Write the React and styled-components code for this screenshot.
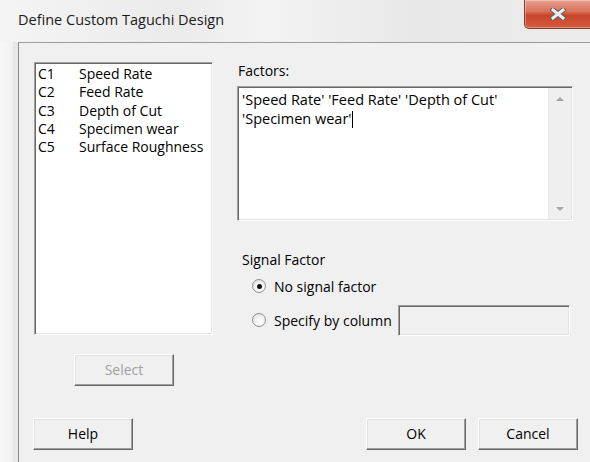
import React from "react";
import styled, { createGlobalStyle } from "styled-components";

const GlobalStyle = createGlobalStyle`
  html, body {
    margin: 0;
    padding: 0;
    background: #f3f3f3;
    overflow: hidden;
  }
`;

const Window = styled.div`
  width: 590px;
  height: 462px;
  display: flex;
  flex-direction: column;
  background: linear-gradient(90deg, #f7f7f7 0, #f2f2f2 12px, #e6e6e6 13px, #e9e9e9 19px);
  font-family: "Open Sans", "Liberation Sans", sans-serif;
  color: #000;
  overflow: hidden;
`;

const TitleBar = styled.div`
  height: 42px;
  display: flex;
  align-items: flex-start;
  justify-content: space-between;
  background: linear-gradient(90deg, #f4f4f4 0%, #ebebeb 30%, #f3f3f3 45%, #e8e8e8 70%, #ececec 100%);
`;

const Title = styled.div`
  font-family: "Open Sans", sans-serif;
  font-size: 14.5px;
  color: #1a1a1a;
  padding: 10px 0 0 18px;
`;

const CloseButton = styled.div`
  width: 66px;
  height: 28px;
  margin-right: -2px;
  border: 1px solid #8a3a2a;
  border-top: none;
  border-radius: 0 0 0 5px;
  background: linear-gradient(180deg, #e9a091 0%, #d8735c 40%, #c8452b 55%, #d65b3d 100%);
  display: flex;
  align-items: center;
  justify-content: center;
  box-shadow: inset 0 0 0 1px rgba(255, 255, 255, 0.35);
`;

const Client = styled.div`
  flex: 1;
  margin-left: 18px;
  border-top: 1px solid #9c9c9c;
  border-left: 1px solid #8c8c8c;
  background: #f0f0f0;
  display: flex;
  flex-direction: column;
  font-size: 14px;
`;

const Body = styled.div`
  display: flex;
  padding: 19px 0 0 15px;
`;

const LeftCol = styled.div`
  width: 179px;
  display: flex;
  flex-direction: column;
  align-items: center;
`;

const sunken = `
  background: #fff;
  border-top: 1px solid #a0a0a0;
  border-left: 1px solid #a0a0a0;
  border-right: 1px solid #fff;
  border-bottom: 1px solid #fff;
  box-shadow: inset 1px 1px 0 #696969, inset -1px -1px 0 #e3e3e3;
  box-sizing: border-box;
`;

const ListBox = styled.div`
  ${sunken}
  width: 179px;
  height: 273px;
  padding: 2px 0 0 3px;
`;

const ListRow = styled.div`
  display: flex;
  height: 18.3px;
  line-height: 18px;
  white-space: nowrap;
`;

const ColId = styled.span`
  width: 41px;
`;

const PushButton = styled.div`
  width: 100px;
  height: 32px;
  box-sizing: border-box;
  display: flex;
  align-items: center;
  justify-content: center;
  background: #f0f0f0;
  border-top: 1px solid #fff;
  border-left: 1px solid #fff;
  border-right: 1px solid #696969;
  border-bottom: 1px solid #696969;
  box-shadow: inset -1px -1px 0 #a0a0a0, inset 1px 1px 0 #e3e3e3;
  color: ${(p) => (p.$disabled ? "#a0a0a0" : "#000")};
  font-size: 14px;
  padding-bottom: 1px;
`;

const SelectButton = styled(PushButton)`
  margin-top: 19px;
  margin-left: 1px;
`;

const RightCol = styled.div`
  margin-left: 24px;
  display: flex;
  flex-direction: column;
`;

const Label = styled.div`
  line-height: 18px;
  margin-bottom: ${(p) => p.$gap || 0}px;
  margin-left: ${(p) => p.$indent || 0}px;
`;

const FactorsBox = styled.div`
  ${sunken}
  width: 336px;
  height: 135px;
  display: flex;
`;

const FactorsText = styled.div`
  flex: 1;
  padding: 4px 0 0 4px;
  font-size: 14.5px;
  line-height: 18.5px;
`;

const Caret = styled.span`
  display: inline-block;
  width: 1px;
  height: 17px;
  background: #000;
  vertical-align: -4px;
`;

const ScrollBar = styled.div`
  width: 22px;
  margin: 1px 1px 1px 0;
  background: #efefef;
  border-left: 1px solid #e8e8e8;
  display: flex;
  flex-direction: column;
  justify-content: space-between;
  align-items: center;
  padding: 9px 0 8px;
`;

const Arrow = styled.div`
  width: 0;
  height: 0;
  border-left: 4px solid transparent;
  border-right: 4px solid transparent;
  ${(p) =>
    p.$down
      ? "border-top: 4px solid #a6a6a6;"
      : "border-bottom: 4px solid #a6a6a6;"}
`;

const SignalGroup = styled.div`
  margin-top: 30px;
  display: flex;
  flex-direction: column;
`;

const RadioRow = styled.div`
  display: flex;
  align-items: center;
  margin-left: 15px;
  height: ${(p) => p.$h || 30}px;
`;

const RadioCircle = styled.span`
  width: 12px;
  height: 12px;
  border-radius: 50%;
  border: 1px solid #8e8e8e;
  background: radial-gradient(circle at 60% 65%, #ffffff 0%, #f1f1f1 50%, #d7d7d7 100%);
  display: flex;
  align-items: center;
  justify-content: center;
  margin-right: 8px;
  &::after {
    content: "";
    width: 5px;
    height: 5px;
    border-radius: 50%;
    background: ${(p) => (p.$checked ? "#111" : "transparent")};
  }
`;

const ColumnInput = styled.div`
  width: 172px;
  height: 31px;
  margin-left: 6px;
  box-sizing: border-box;
  background: #f0f0f0;
  border-top: 1px solid #a0a0a0;
  border-left: 1px solid #a0a0a0;
  border-right: 1px solid #fff;
  border-bottom: 1px solid #fff;
  box-shadow: inset 1px 1px 0 #696969, inset -1px -1px 0 #e3e3e3;
`;

const Footer = styled.div`
  display: flex;
  align-items: center;
  padding: 32px 12px 0 14px;
`;

const Spacer = styled.div`
  flex: 1;
`;

const FooterButtons = styled.div`
  display: flex;
  gap: 12px;
`;

const columns = [
  ["C1", "Speed Rate"],
  ["C2", "Feed Rate"],
  ["C3", "Depth of Cut"],
  ["C4", "Specimen wear"],
  ["C5", "Surface Roughness"],
];

const CloseGlyph = () => (
  <svg width="16" height="12" viewBox="0 0 16 12">
    <path
      d="M3 2 L13 10 M13 2 L3 10"
      stroke="#5e5e5e"
      strokeWidth="5"
      strokeLinecap="square"
    />
    <path
      d="M3 2 L13 10 M13 2 L3 10"
      stroke="#eeeeee"
      strokeWidth="3"
      strokeLinecap="square"
    />
  </svg>
);

const App = () => {
  return (
    <>
      <GlobalStyle />
      <Window>
        <TitleBar>
          <Title>Define Custom Taguchi Design</Title>
          <CloseButton>
            <CloseGlyph />
          </CloseButton>
        </TitleBar>
        <Client>
          <Body>
            <LeftCol>
              <ListBox>
                {columns.map(([id, name]) => (
                  <ListRow key={id}>
                    <ColId>{id}</ColId>
                    <span>{name}</span>
                  </ListRow>
                ))}
              </ListBox>
              <SelectButton $disabled>Select</SelectButton>
            </LeftCol>
            <RightCol>
              <Label $gap={6} $indent={1}>Factors:</Label>
              <FactorsBox>
                <FactorsText>
                  'Speed Rate' 'Feed Rate' 'Depth of Cut'
                  <br />
                  'Specimen wear'
                  <Caret />
                </FactorsText>
                <ScrollBar>
                  <Arrow />
                  <Arrow $down />
                </ScrollBar>
              </FactorsBox>
              <SignalGroup>
                <Label $indent={5} $gap={3}>Signal Factor</Label>
                <RadioRow $h={28}>
                  <RadioCircle $checked />
                  No signal factor
                </RadioRow>
                <RadioRow $h={40}>
                  <RadioCircle />
                  Specify by column
                  <ColumnInput />
                </RadioRow>
              </SignalGroup>
            </RightCol>
          </Body>
          <Footer>
            <PushButton>Help</PushButton>
            <Spacer />
            <FooterButtons>
              <PushButton>OK</PushButton>
              <PushButton>Cancel</PushButton>
            </FooterButtons>
          </Footer>
        </Client>
      </Window>
    </>
  );
};

export default App;
